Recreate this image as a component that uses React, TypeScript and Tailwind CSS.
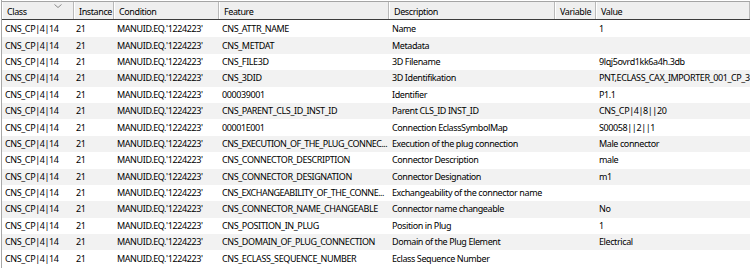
import React from 'react';

type Row = {
  feature: string;
  description: string;
  value: string;
};

const rows: Row[] = [
  { feature: 'CNS_ATTR_NAME', description: 'Name', value: '1' },
  { feature: 'CNS_METDAT', description: 'Metadata', value: '' },
  { feature: 'CNS_FILE3D', description: '3D Filename', value: '9lqj5ovrd1kk6a4h.3db' },
  { feature: 'CNS_3DID', description: '3D Identifikation', value: 'PNT,ECLASS_CAX_IMPORTER_001_CP_3' },
  { feature: '000039001', description: 'Identifier', value: 'P1.1' },
  { feature: 'CNS_PARENT_CLS_ID_INST_ID', description: 'Parent CLS_ID INST_ID', value: 'CNS_CP|4|8||20' },
  { feature: '00001E001', description: 'Connection EclassSymbolMap', value: 'S00058||2||1' },
  { feature: 'CNS_EXECUTION_OF_THE_PLUG_CONNEC...', description: 'Execution of the plug connection', value: 'Male connector' },
  { feature: 'CNS_CONNECTOR_DESCRIPTION', description: 'Connector Description', value: 'male' },
  { feature: 'CNS_CONNECTOR_DESIGNATION', description: 'Connector Designation', value: 'm1' },
  { feature: 'CNS_EXCHANGEABILITY_OF_THE_CONNE...', description: 'Exchangeability of the connector name', value: '' },
  { feature: 'CNS_CONNECTOR_NAME_CHANGEABLE', description: 'Connector name changeable', value: 'No' },
  { feature: 'CNS_POSITION_IN_PLUG', description: 'Position in Plug', value: '1' },
  { feature: 'CNS_DOMAIN_OF_PLUG_CONNECTION', description: 'Domain of the Plug Element', value: 'Electrical' },
  { feature: 'CNS_ECLASS_SEQUENCE_NUMBER', description: 'Eclass Sequence Number', value: '' },
];

const headers = ['Class', 'Instance', 'Condition', 'Feature', 'Description', 'Variable', 'Value'];

const cols = 'grid grid-cols-[72px_40px_105px_170px_166px_41px_1fr]';

const App: React.FC = () => {
  return (
    <div
      className="w-[750px] h-[268px] overflow-hidden bg-white text-[9px] tracking-[-0.4px] text-black"
      style={{ fontFamily: '"Noto Sans", "Open Sans", sans-serif' }}
    >
      <div className="ml-[1px] border-l border-[#a8a8a8] h-full">
        {/* Header */}
        <div className="pt-[1px] bg-white">
          <div className={`${cols} h-[19px] border-t border-[#a5a5a5] border-b border-b-[#3c3c3c] bg-[#efefef]`}>
            {headers.map((h, i) => (
              <div
                key={h}
                className="relative flex items-center pl-[4px] pt-[2px] border-r border-[#b9b9b9] border-l border-l-white leading-[14px] whitespace-nowrap"
              >
                {h}
                {i === 0 && (
                  <svg className="absolute left-[51px] top-[2px]" width="8" height="5" viewBox="0 0 8 5">
                    <path d="M0.5 0.5 L4 3.5 L7.5 0.5" fill="none" stroke="#8a8a8a" strokeWidth="1" />
                  </svg>
                )}
              </div>
            ))}
          </div>
        </div>

        {/* Rows */}
        <div className="pt-[1px]">
          {rows.map((r, i) => (
            <div
              key={i}
              className={`${cols} h-[16.4px] items-center leading-[16px] whitespace-nowrap ${i % 2 === 1 ? 'bg-[#f2f2f2]' : 'bg-white'}`}
            >
              <div className="pl-[3px]">CNS_CP|4|14</div>
              <div className="pl-[2px]">21</div>
              <div className="pl-[3px]">MANUID.EQ.'1224223'</div>
              <div className={`pl-[3px] ${r.feature.endsWith('...') ? 'tracking-[-0.5px]' : ''}`}>{r.feature}</div>
              <div className="pl-[3px]">{r.description}</div>
              <div />
              <div className="pl-[3px]">{r.value}</div>
            </div>
          ))}
        </div>
      </div>
    </div>
  );
};

export default App;
